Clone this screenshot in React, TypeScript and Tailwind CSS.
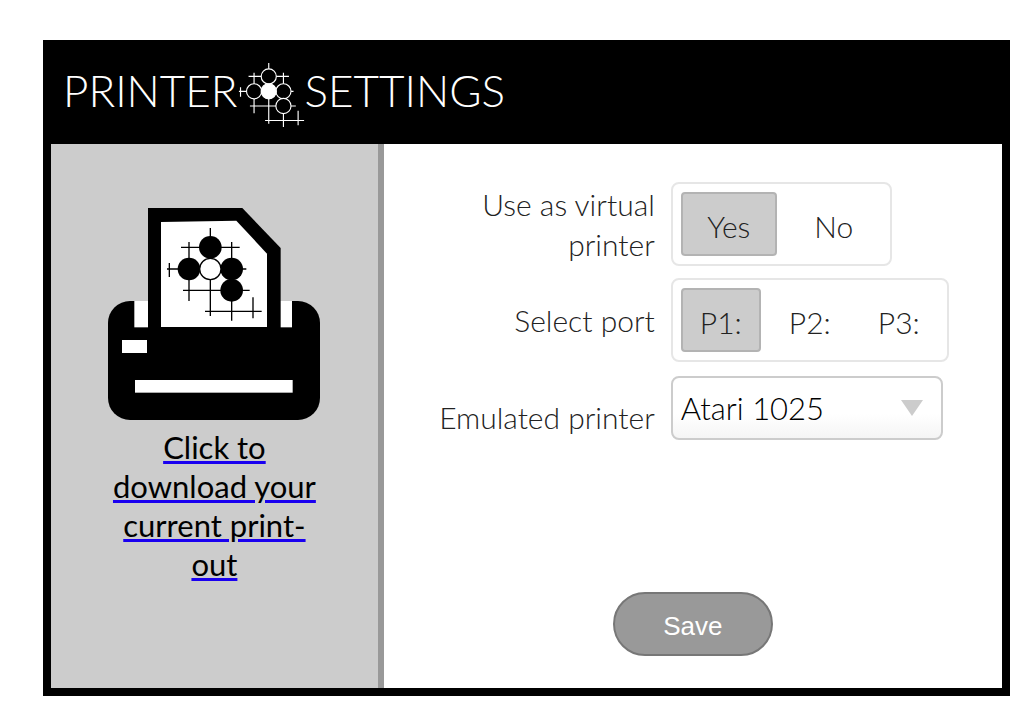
import { useState } from "react";

type BoardProps = { className?: string; stroke: number };

function Lattice({ stroke }: { stroke: number }) {
  return (
    <g strokeWidth={stroke} fill="none" stroke="currentColor">
      <path d="M184 24V288M96 82H272M120 66V243M248 66V302M54 147H292M61 129V171M102 211H302M168 274H338M312 232V295" />
    </g>
  );
}

function HeaderGlyph({ className, stroke }: BoardProps) {
  return (
    <svg viewBox="50 20 292 286" className={className} aria-hidden="true">
      <Lattice stroke={stroke} />
      <g stroke="currentColor" strokeWidth={stroke} fill="black">
        <circle cx="184" cy="82" r="33" />
        <circle cx="120" cy="147" r="33" />
        <circle cx="248" cy="147" r="33" />
        <circle cx="248" cy="211" r="33" />
        <circle cx="184" cy="147" r="33" fill="white" />
      </g>
    </svg>
  );
}

function PrinterDrawing() {
  return (
    <svg viewBox="27 24 636 636" className="h-[212px] w-[212px] text-black" aria-hidden="true">
      <rect x="27" y="303" width="636" height="357" rx="66" fill="black" />
      <rect x="106" y="303" width="473" height="79" fill="white" />
      <path d="M147 24H430L545 144V400H147Z" fill="black" />
      <path d="M186 66L412 62L504 161V381H186Z" fill="white" />
      <rect x="69" y="420" width="75" height="39" fill="white" />
      <rect x="108" y="540" width="473" height="38" fill="white" />
      <g transform="translate(150 60)">
        <Lattice stroke={4} />
        <circle cx="184" cy="82" r="34" />
        <circle cx="120" cy="147" r="34" />
        <circle cx="248" cy="147" r="34" />
        <circle cx="248" cy="211" r="34" />
        <circle cx="184" cy="147" r="32" fill="white" stroke="black" strokeWidth="4" />
      </g>
    </svg>
  );
}

type ChoiceProps = {
  name: string;
  label: string;
  options: string[];
  size: "wide" | "narrow";
};

function Choice({ name, label, options, size }: ChoiceProps) {
  const [value, setValue] = useState(options[0]);
  return (
    <div
      role="radiogroup"
      aria-label={label}
      className="flex w-fit gap-[9px] rounded-lg border-2 border-[#e6e6e6] p-2"
    >
      {options.map((option) => (
        <label
          key={option}
          className={`relative flex h-16 cursor-pointer items-center justify-center rounded-sm border-2 pt-1 ${
            size === "wide" ? "w-24" : "w-20"
          } ${value === option ? "border-[#b3b3b3] bg-[#ccc]" : "border-transparent"}`}
        >
          <input
            type="radio"
            name={name}
            value={option}
            checked={value === option}
            onChange={() => setValue(option)}
            className="sr-only"
          />
          {option}
        </label>
      ))}
    </div>
  );
}

export default function App() {
  return (
    <div className="bg-white pt-10 pr-4 pb-5 pl-[43px] font-['Lato',sans-serif]">
      <div className="border-8 border-black bg-white">
        <header className="flex h-24 items-center bg-black pb-3 pl-3">
          <h1 className="flex items-center text-[44px] font-light text-white">
            <span>PRINTER</span>
            <HeaderGlyph className="mt-2.5 h-[66px] w-[67px] shrink-0" stroke={5} />
            <span>SETTINGS</span>
          </h1>
        </header>
        <div className="flex min-h-[544px]">
          <aside className="flex w-[35%] flex-col items-center border-r-[6px] border-[#999] bg-[#ccc] pt-16 pb-24">
            <a
              href="#printout"
              className="flex w-[212px] flex-col gap-2 text-center text-[31px] leading-[39px] text-black"
            >
              <PrinterDrawing />
              <span className="underline decoration-[#1a00f0] decoration-[3px]">
                Click to download your current print-out
              </span>
            </a>
          </aside>
          <form
            className="flex flex-1 flex-col pt-[38px] pb-8 text-[30px] leading-[40px] font-light text-[#222]"
            onSubmit={(event) => event.preventDefault()}
          >
            <div className="grid grid-cols-[9fr_11fr] items-center gap-x-4 gap-y-3">
              <div className="pl-2 text-right">Use as virtual printer</div>
              <Choice name="virtual" label="Use as virtual printer" options={["Yes", "No"]} size="wide" />
              <div className="text-right">Select port</div>
              <Choice name="port" label="Select port" options={["P1:", "P2:", "P3:"]} size="narrow" />
              <label htmlFor="printer" className="pt-5 text-right">
                Emulated printer
              </label>
              <div className="relative mt-0.5 w-[272px]">
                <select
                  id="printer"
                  className="h-16 w-full appearance-none rounded-lg border-2 border-[#ccc] bg-linear-to-b from-white from-60% to-[#f5f5f5] px-2 text-[31px] text-black"
                >
                  <option>Atari 1025</option>
                </select>
                <svg
                  viewBox="0 0 22 16"
                  className="pointer-events-none absolute top-6 right-5 h-4 w-[22px]"
                  aria-hidden="true"
                >
                  <path d="M0 0H22L11 16Z" fill="#ccc" />
                </svg>
              </div>
            </div>
            <button
              type="submit"
              className="mt-auto h-16 w-40 cursor-pointer self-center rounded-full border-2 border-[#777] bg-[#999] pt-1 font-['Liberation_Sans',sans-serif] text-[26px] font-normal text-white"
            >
              Save
            </button>
          </form>
        </div>
      </div>
    </div>
  );
}
